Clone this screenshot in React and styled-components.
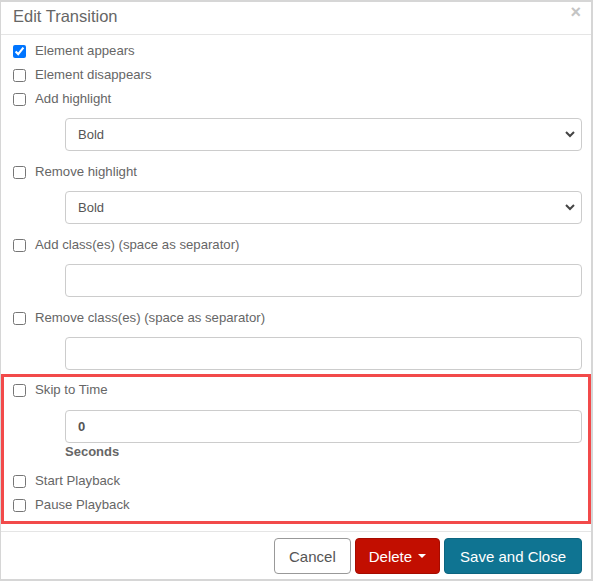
import React from 'react';
import styled, { createGlobalStyle } from 'styled-components';

const GlobalStyle = createGlobalStyle`
  html, body {
    margin: 0;
    padding: 0;
    background: #fff;
  }
  body {
    font-family: "Liberation Sans", Arial, sans-serif;
  }
  * {
    box-sizing: border-box;
  }
`;

const Modal = styled.div`
  width: 593px;
  height: 581px;
  border: 2px solid #d6d6d6;
  border-left-width: 1px;
  background: #fff;
  display: flex;
  flex-direction: column;
`;

const Header = styled.header`
  height: 33px;
  border-bottom: 1px solid #e5e5e5;
  display: flex;
  align-items: flex-start;
  justify-content: space-between;
  padding: 4px 10px 0 12px;
`;

const Title = styled.h4`
  margin: 0;
  font-size: 16.5px;
  line-height: 20px;
  font-weight: 400;
  color: #666;
`;

const Close = styled.button`
  border: none;
  background: none;
  padding: 0;
  color: #c4c4c4;
  font-size: 18px;
  font-weight: 700;
  line-height: 1;
  cursor: pointer;
  margin-top: -3px;
`;

const Body = styled.div`
  flex: 1;
  padding-top: 3px;
`;

const Group = styled.div`
  padding: 0 9px 0 10px;
`;

const Highlight = styled.section`
  border: 3px solid #f24a4a;
  margin: 4px 0 0 0;
  padding: 0 6px 0 7px;
  height: 150px;
`;

const Row = styled.label`
  height: 24px;
  display: flex;
  align-items: center;
  font-size: 13.2px;
  color: #666;
  cursor: pointer;
`;

const Check = styled.input.attrs({ type: 'checkbox' })`
  width: 13px;
  height: 13px;
  margin: 3px 9px 0 2px;
  accent-color: #0075ff;
`;

const Indented = styled.div`
  padding-left: 54px;
  margin: ${(p) => p.$margin || '8px 0'};
`;

const Field = styled.input`
  width: 100%;
  height: 33px;
  border: 1px solid #ccc;
  border-radius: 4px;
  padding: 0 12px;
  font-family: inherit;
  font-size: 13px;
  font-weight: ${(p) => (p.$bold ? 700 : 400)};
  color: #555;
  outline: none;
`;

const SelectWrap = styled.div`
  position: relative;
  & svg {
    position: absolute;
    right: 6px;
    top: 11px;
    pointer-events: none;
  }
`;

const Select = styled.select`
  width: 100%;
  height: 33px;
  border: 1px solid #ccc;
  border-radius: 4px;
  padding: 0 12px;
  font-family: inherit;
  font-size: 13px;
  color: #555;
  background: #fff;
  appearance: none;
  outline: none;
`;

const Hint = styled.div`
  font-size: 13px;
  line-height: 15px;
  font-weight: 700;
  color: #666;
  margin-top: 1px;
`;

const Footer = styled.footer`
  border-top: 1px solid #e5e5e5;
  margin-top: 5px;
  height: 48px;
  display: flex;
  justify-content: flex-end;
  align-items: center;
  gap: 4px;
  padding: 1px 9px 0 0;
`;

const paddings = { primary: '15px', danger: '13px' };

const Button = styled.button`
  height: 36px;
  border-radius: 4px;
  padding: 0 ${(p) => paddings[p.$variant] || '14px'};
  font-family: inherit;
  font-size: 15px;
  cursor: pointer;
  display: flex;
  align-items: center;
  gap: 6px;
  border: 1px solid ${(p) => (p.$variant === 'danger' ? '#a50b00' : p.$variant === 'primary' ? '#0c6580' : '#999')};
  background: ${(p) => (p.$variant === 'danger' ? '#c20e00' : p.$variant === 'primary' ? '#0f7492' : '#fff')};
  color: ${(p) => (p.$variant ? '#fff' : '#555')};
`;

const Caret = styled.span`
  width: 0;
  height: 0;
  border-left: 4px solid transparent;
  border-right: 4px solid transparent;
  border-top: 4px solid #fff;
`;

const PlaybackRows = styled.div`
  margin-top: 9px;
`;

const Chevron = () => (
  <svg width="12" height="10" viewBox="0 0 12 10">
    <path d="M2 3 L6 7 L10 3" fill="none" stroke="#444" strokeWidth="2" />
  </svg>
);

const CheckRow = ({ label, checked }) => (
  <Row>
    <Check defaultChecked={checked} />
    {label}
  </Row>
);

const SelectField = () => (
  <Indented>
    <SelectWrap>
      <Select defaultValue="Bold">
        <option>Bold</option>
      </Select>
      <Chevron />
    </SelectWrap>
  </Indented>
);

const TextField = ({ margin }) => (
  <Indented $margin={margin}>
    <Field type="text" />
  </Indented>
);

const App = () => {
  return (
    <>
      <GlobalStyle />
      <Modal>
        <Header>
          <Title>Edit Transition</Title>
          <Close aria-label="Close">×</Close>
        </Header>
        <Body>
          <Group>
            <CheckRow label="Element appears" checked />
            <CheckRow label="Element disappears" />
            <CheckRow label="Add highlight" />
            <SelectField />
            <CheckRow label="Remove highlight" />
            <SelectField />
            <CheckRow label="Add class(es) (space as separator)" />
            <TextField />
            <CheckRow label="Remove class(es) (space as separator)" />
            <TextField margin="8px 0 0" />
          </Group>
          <Highlight>
            <CheckRow label="Skip to Time" />
            <Indented $margin="9px 0 0">
              <Field type="text" defaultValue="0" $bold />
              <Hint>Seconds</Hint>
            </Indented>
            <PlaybackRows>
              <CheckRow label="Start Playback" />
              <CheckRow label="Pause Playback" />
            </PlaybackRows>
          </Highlight>
        </Body>
        <Footer>
          <Button>Cancel</Button>
          <Button $variant="danger">
            Delete <Caret />
          </Button>
          <Button $variant="primary">Save and Close</Button>
        </Footer>
      </Modal>
    </>
  );
};

export default App;
